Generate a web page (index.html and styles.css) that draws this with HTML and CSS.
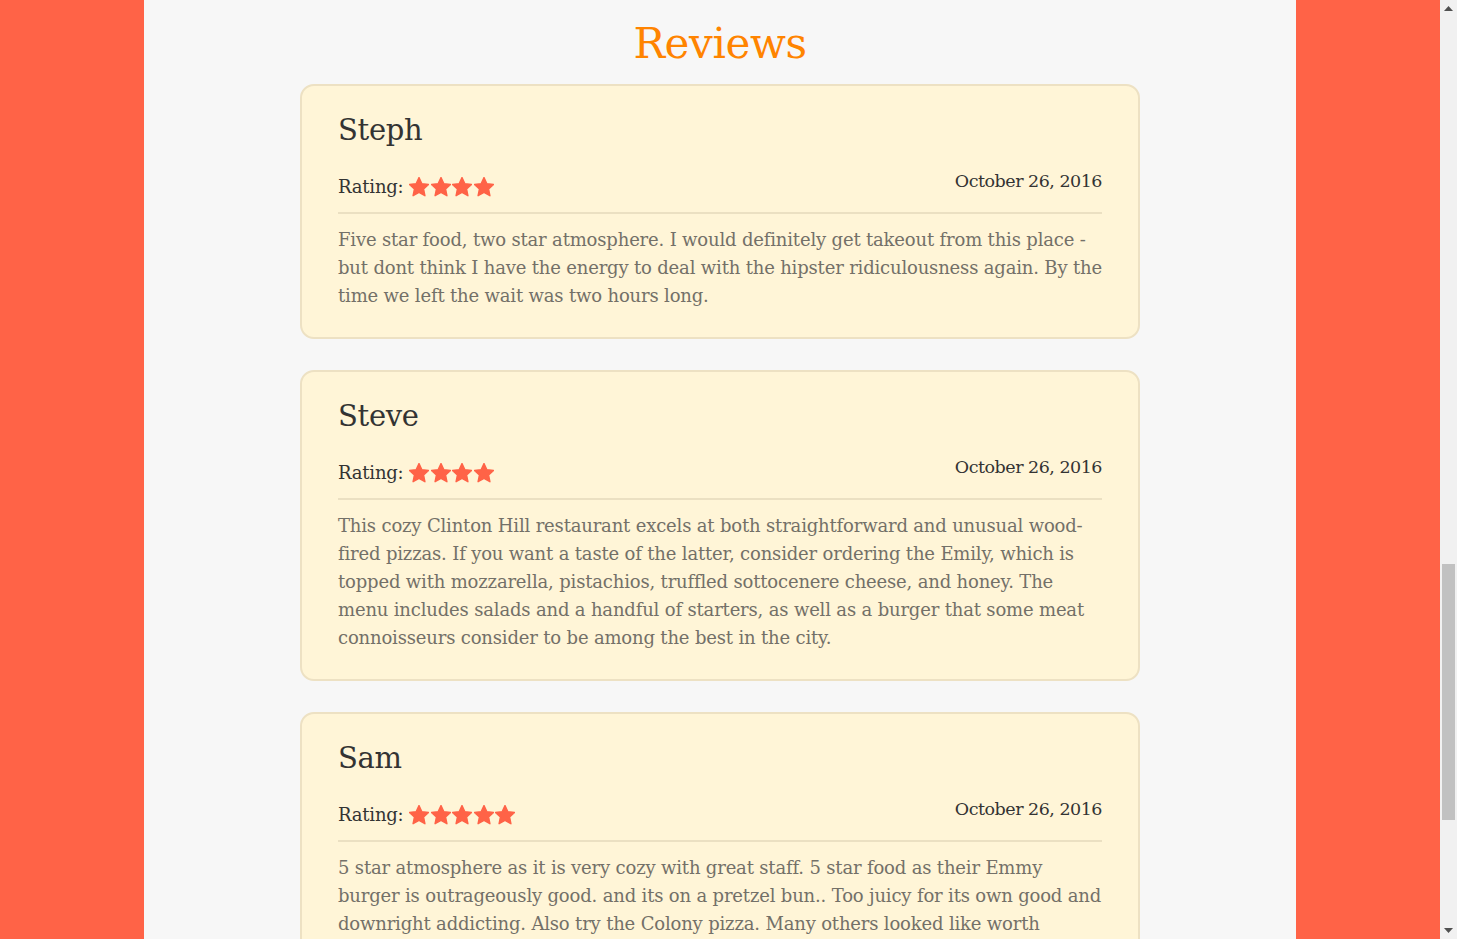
FILE: index.html
```html
<!DOCTYPE html>
<html lang="en">
<head>
<meta charset="utf-8">
<title>Reviews</title>
<link rel="stylesheet" href="styles.css">
</head>
<body>
<div class="viewport">
<main class="page">
  <section class="reviews">
    <h2 class="reviews-title">Reviews</h2>

    <article class="review">
      <h3 class="review-name">Steph</h3>
      <div class="review-meta">
        <div class="review-rating"><span class="rating-label">Rating:</span>
          <span class="stars">
            <svg class="star" viewBox="2 2 20 20"><path d="M12 2.5l2.9 6.2 6.6.8-4.9 4.6 1.3 6.6L12 17.4l-5.9 3.3 1.3-6.6-4.9-4.6 6.6-.8z"/></svg>
            <svg class="star" viewBox="2 2 20 20"><path d="M12 2.5l2.9 6.2 6.6.8-4.9 4.6 1.3 6.6L12 17.4l-5.9 3.3 1.3-6.6-4.9-4.6 6.6-.8z"/></svg>
            <svg class="star" viewBox="2 2 20 20"><path d="M12 2.5l2.9 6.2 6.6.8-4.9 4.6 1.3 6.6L12 17.4l-5.9 3.3 1.3-6.6-4.9-4.6 6.6-.8z"/></svg>
            <svg class="star" viewBox="2 2 20 20"><path d="M12 2.5l2.9 6.2 6.6.8-4.9 4.6 1.3 6.6L12 17.4l-5.9 3.3 1.3-6.6-4.9-4.6 6.6-.8z"/></svg>
          </span>
        </div>
        <div class="review-date">October 26, 2016</div>
      </div>
      <p class="review-text">Five star food, two star atmosphere. I would definitely get takeout from this place - but dont think I have the energy to deal with the hipster ridiculousness again. By the time we left the wait was two hours long.</p>
    </article>

    <article class="review">
      <h3 class="review-name">Steve</h3>
      <div class="review-meta">
        <div class="review-rating"><span class="rating-label">Rating:</span>
          <span class="stars">
            <svg class="star" viewBox="2 2 20 20"><path d="M12 2.5l2.9 6.2 6.6.8-4.9 4.6 1.3 6.6L12 17.4l-5.9 3.3 1.3-6.6-4.9-4.6 6.6-.8z"/></svg>
            <svg class="star" viewBox="2 2 20 20"><path d="M12 2.5l2.9 6.2 6.6.8-4.9 4.6 1.3 6.6L12 17.4l-5.9 3.3 1.3-6.6-4.9-4.6 6.6-.8z"/></svg>
            <svg class="star" viewBox="2 2 20 20"><path d="M12 2.5l2.9 6.2 6.6.8-4.9 4.6 1.3 6.6L12 17.4l-5.9 3.3 1.3-6.6-4.9-4.6 6.6-.8z"/></svg>
            <svg class="star" viewBox="2 2 20 20"><path d="M12 2.5l2.9 6.2 6.6.8-4.9 4.6 1.3 6.6L12 17.4l-5.9 3.3 1.3-6.6-4.9-4.6 6.6-.8z"/></svg>
          </span>
        </div>
        <div class="review-date">October 26, 2016</div>
      </div>
      <p class="review-text">This cozy Clinton Hill restaurant excels at both straightforward and unusual wood-fired pizzas. If you want a taste of the latter, consider ordering the Emily, which is topped with mozzarella, pistachios, truffled sottocenere cheese, and honey. The menu includes salads and a handful of starters, as well as a burger that some meat connoisseurs consider to be among the best in the city.</p>
    </article>

    <article class="review">
      <h3 class="review-name">Sam</h3>
      <div class="review-meta">
        <div class="review-rating"><span class="rating-label">Rating:</span>
          <span class="stars">
            <svg class="star" viewBox="2 2 20 20"><path d="M12 2.5l2.9 6.2 6.6.8-4.9 4.6 1.3 6.6L12 17.4l-5.9 3.3 1.3-6.6-4.9-4.6 6.6-.8z"/></svg>
            <svg class="star" viewBox="2 2 20 20"><path d="M12 2.5l2.9 6.2 6.6.8-4.9 4.6 1.3 6.6L12 17.4l-5.9 3.3 1.3-6.6-4.9-4.6 6.6-.8z"/></svg>
            <svg class="star" viewBox="2 2 20 20"><path d="M12 2.5l2.9 6.2 6.6.8-4.9 4.6 1.3 6.6L12 17.4l-5.9 3.3 1.3-6.6-4.9-4.6 6.6-.8z"/></svg>
            <svg class="star" viewBox="2 2 20 20"><path d="M12 2.5l2.9 6.2 6.6.8-4.9 4.6 1.3 6.6L12 17.4l-5.9 3.3 1.3-6.6-4.9-4.6 6.6-.8z"/></svg>
            <svg class="star" viewBox="2 2 20 20"><path d="M12 2.5l2.9 6.2 6.6.8-4.9 4.6 1.3 6.6L12 17.4l-5.9 3.3 1.3-6.6-4.9-4.6 6.6-.8z"/></svg>
          </span>
        </div>
        <div class="review-date">October 26, 2016</div>
      </div>
      <p class="review-text">5 star atmosphere as it is very cozy with great staff. 5 star food as their Emmy burger is outrageously good. and its on a pretzel bun.. Too juicy for its own good and downright addicting. Also try the Colony pizza. Many others looked like worth ordering next time.</p>
    </article>
  </section>
</main>
</div>
<aside class="scrollbar" aria-hidden="true">
  <div class="scroll-btn">
    <svg viewBox="0 0 9 5" class="scroll-arrow"><path d="M4.5 0L9 5H0z"/></svg>
  </div>
  <div class="scroll-track">
    <div class="scroll-thumb"></div>
  </div>
  <div class="scroll-btn">
    <svg viewBox="0 0 9 5" class="scroll-arrow"><path d="M0 0h9L4.5 5z"/></svg>
  </div>
</aside>
</body>
</html>
```

FILE: styles.css
```css
html, body {
  margin: 0;
  padding: 0;
  height: 100%;
  overflow: hidden;
}

body {
  display: flex;
  background: #ff6347;
  font-family: "DejaVu Serif", "Liberation Serif", serif;
  color: #333;
}

.viewport {
  flex: 1;
  height: 100vh;
  overflow: hidden;
}

.scrollbar {
  width: 17px;
  flex: none;
  height: 100vh;
  display: flex;
  flex-direction: column;
  background: #f1f1f1;
}

.scroll-btn {
  height: 17px;
  flex: none;
  display: flex;
  align-items: center;
  justify-content: center;
}

.scroll-arrow {
  width: 9px;
  height: 5px;
  fill: #505050;
}

.scroll-track {
  flex: 1;
  padding: 0 2px;
}

.scroll-thumb {
  margin-top: 547px;
  height: 256px;
  background: #c1c1c1;
}

.page {
  width: 80%;
  margin: 0 auto;
  background: #f7f7f7;
  min-height: 100%;
  padding: 0 0 40px;
}

.reviews {
  display: flex;
  flex-direction: column;
  align-items: center;
}

.reviews-title {
  margin: 16px 0 12px;
  font-size: 42px;
  line-height: 56px;
  letter-spacing: -0.4px;
  font-weight: 400;
  color: #ff8400;
}

.review {
  box-sizing: border-box;
  width: 840px;
  margin: 0 0 31px;
  padding: 20px 36px 27px;
  background: #fff5d7;
  border: 2px solid #ede1c3;
  border-radius: 14px;
}

.review-name {
  margin: 0;
  font-size: 29px;
  line-height: 48px;
  letter-spacing: -0.3px;
  font-weight: 400;
  color: #333;
}

.review-meta {
  display: flex;
  justify-content: space-between;
  align-items: flex-start;
  padding: 20px 0 12px;
  border-bottom: 2px solid #ebe0c2;
}

.review-rating {
  display: flex;
  align-items: center;
  gap: 6px;
  font-size: 18px;
  line-height: 26px;
  color: #333;
}

.rating-label {
  letter-spacing: -0.2px;
}

.stars {
  display: flex;
  gap: 1.5px;
}

.star {
  width: 20px;
  height: 20px;
  fill: #ff6347;
  stroke: #ff6347;
  stroke-width: 1.4;
  stroke-linejoin: round;
}

.review-date {
  font-size: 17.5px;
  line-height: 26px;
  letter-spacing: -0.5px;
  margin-top: -6px;
  color: #333;
}

.review-text {
  margin: 12px 0 0;
  font-size: 18px;
  line-height: 28px;
  letter-spacing: -0.17px;
  color: #737068;
}
```
